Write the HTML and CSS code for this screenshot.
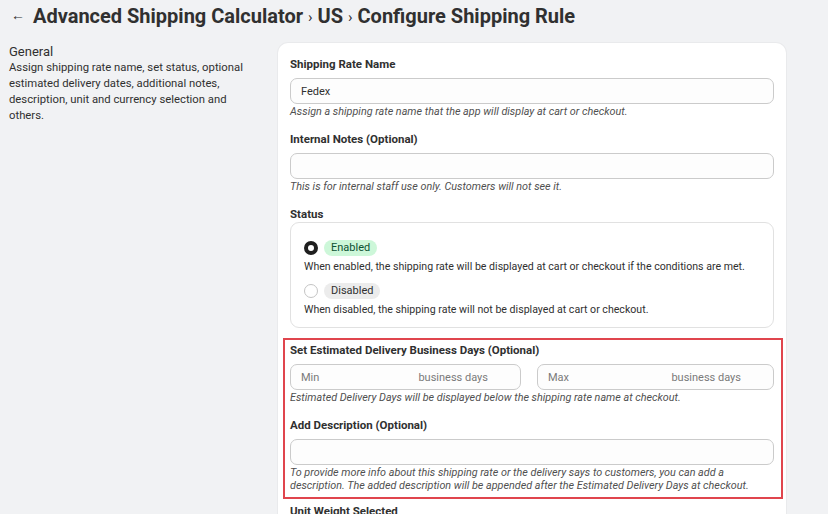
FILE: index.html
```html
<!DOCTYPE html>
<html lang="en">
<head>
<meta charset="utf-8">
<title>Configure Shipping Rule</title>
<link rel="stylesheet" href="styles.css">
</head>
<body>
<header class="page-header">
  <span class="back">←</span>
  <h1 class="title">Advanced Shipping Calculator <span class="sep">›</span> US <span class="sep">›</span> Configure Shipping Rule</h1>
</header>
<main class="layout">
  <aside class="intro">
    <h2 class="intro-title">General</h2>
    <p class="intro-text">Assign shipping rate name, set status, optional estimated delivery dates, additional notes, description, unit and currency selection and others.</p>
  </aside>
  <section class="card">
    <div class="field">
      <div class="label">Shipping Rate Name</div>
      <div class="input"><span class="value">Fedex</span></div>
      <div class="help">Assign a shipping rate name that the app will display at cart or checkout.</div>
    </div>
    <div class="field">
      <div class="label">Internal Notes (Optional)</div>
      <div class="input"></div>
      <div class="help">This is for internal staff use only. Customers will not see it.</div>
    </div>
    <div class="field field-status">
      <div class="label label-tight">Status</div>
      <div class="status-box">
        <div class="option">
          <span class="radio radio-on"></span>
          <span class="badge badge-green">Enabled</span>
        </div>
        <div class="option-desc">When enabled, the shipping rate will be displayed at cart or checkout if the conditions are met.</div>
        <div class="option option-second">
          <span class="radio"></span>
          <span class="badge badge-gray">Disabled</span>
        </div>
        <div class="option-desc">When disabled, the shipping rate will not be displayed at cart or checkout.</div>
      </div>
    </div>
    <div class="highlight">
      <div class="field">
        <div class="label">Set Estimated Delivery Business Days (Optional)</div>
        <div class="pair">
          <div class="input input-split"><span class="ph">Min</span><span class="suffix">business days</span></div>
          <div class="input input-split"><span class="ph">Max</span><span class="suffix">business days</span></div>
        </div>
        <div class="help">Estimated Delivery Days will be displayed below the shipping rate name at checkout.</div>
      </div>
      <div class="field">
        <div class="label">Add Description (Optional)</div>
        <div class="input"></div>
        <div class="help">To provide more info about this shipping rate or the delivery says to customers, you can add a description. The added description will be appended after the Estimated Delivery Days at checkout.</div>
      </div>
    </div>
    <div class="field">
      <div class="label">Unit Weight Selected</div>
    </div>
  </section>
</main>
</body>
</html>
```

FILE: styles.css
```css
* { box-sizing: border-box; }
html, body { margin: 0; padding: 0; }
body {
  background: #f1f2f4;
  font-family: Roboto, "Noto Sans", sans-serif;
  color: #303030;
  width: 828px;
  height: 514px;
  overflow: hidden;
}
.page-header {
  display: flex;
  align-items: center;
  height: 32px;
  padding: 0 0 0 11px;
}
.back {
  font-size: 14px;
  width: 22px;
  color: #303030;
  line-height: 1;
  margin-bottom: 3px;
}
.title {
  margin: 0;
  font-size: 20px;
  font-weight: 700;
  color: #303030;
}
.sep {
  font-weight: 400;
  font-size: 15px;
  position: relative;
  top: -1px;
}
.layout {
  display: flex;
  padding: 11px 0 0 9px;
}
.intro {
  width: 269px;
  flex: none;
  padding-top: 1px;
}
.intro-title {
  margin: 0;
  font-size: 13px;
  font-weight: 400;
  line-height: 16px;
}
.intro-text {
  margin: 0;
  width: 245px;
  font-size: 11.3px;
  line-height: 16px;
}
.card {
  width: 508px;
  flex: none;
  background: #fff;
  border-radius: 10px 10px 0 0;
  padding: 14px 12px 20px 12px;
  height: 480px;
  box-shadow: 0 0 0 1px rgba(0,0,0,0.03);
}
.field { margin-bottom: 14px; }
.field-status { margin-bottom: 10px; }
.label {
  font-size: 11.5px;
  font-weight: 700;
  line-height: 14px;
  margin-bottom: 7px;
}
.label-tight { margin-bottom: 1px; }
.input {
  height: 26px;
  border: 1px solid #cbcbcb;
  border-radius: 7px;
  background: #fdfdfd;
  display: flex;
  align-items: center;
  padding: 0 10px;
  font-size: 11px;
}
.value { color: #303030; }
.help {
  font-size: 10.8px;
  font-style: italic;
  line-height: 13px;
  padding-top: 1px;
  color: #505050;
}
.status-box {
  border: 1px solid #e1e1e1;
  border-radius: 9px;
  padding: 15px 13px 12px 13px;
  height: 106px;
}
.option {
  display: flex;
  align-items: center;
  height: 20px;
  gap: 6px;
}
.option-second { margin-top: 7px; }
.radio {
  width: 14px;
  height: 14px;
  border-radius: 50%;
  border: 1px solid #c4c4c4;
  background: #fff;
  flex: none;
}
.radio-on { border: 4px solid #1f1f1f; }
.badge {
  font-size: 11px;
  line-height: 16px;
  padding: 0 7px;
  border-radius: 8px;
}
.badge-green { background: #cdf7d9; color: #0c5132; }
.badge-gray { background: #ececec; color: #303030; }
.option-desc {
  font-size: 10.6px;
  line-height: 14px;
  margin-top: 2px;
}
.highlight {
  border: 2px solid #e0454d;
  margin: 0 -9px 5px -7px;
  padding: 3px 7px 5px 5px;
}
.highlight .field:last-child { margin-bottom: 0; }
.pair {
  display: flex;
  gap: 16px;
}
.input-split {
  flex: 1;
  justify-content: space-between;
  padding: 0 32px 0 10px;
}
.input-split:first-child { flex: 0 0 231px; }
.ph, .suffix { color: #7a7a7a; font-size: 11px; }
```
